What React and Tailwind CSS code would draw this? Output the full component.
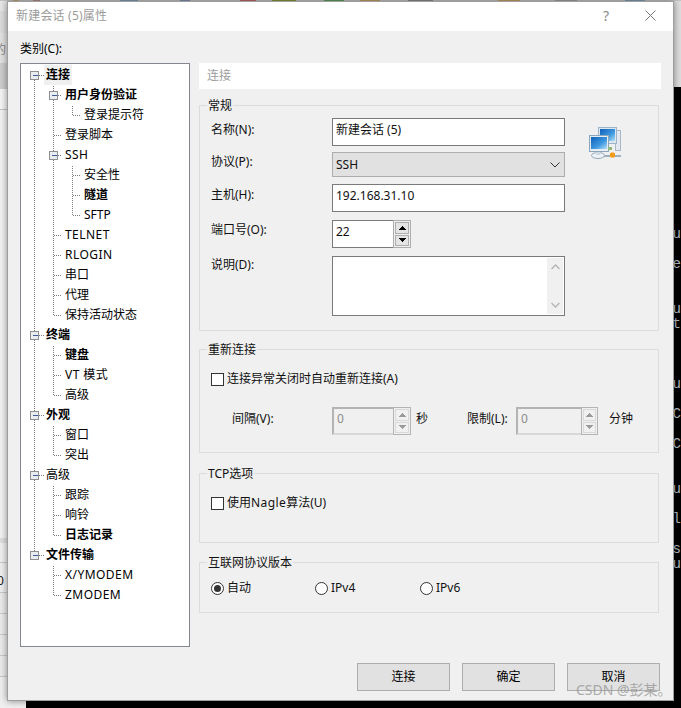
import React from "react";

const FONT = '"Noto Sans", "Noto Sans CJK SC", sans-serif';

const rows = [
  { t: "连接", l: 0, b: 1, e: 1, sel: 1 },
  { t: "用户身份验证", l: 1, b: 1, e: 1 },
  { t: "登录提示符", l: 2 },
  { t: "登录脚本", l: 1 },
  { t: "SSH", l: 1, e: 1, w: 1 },
  { t: "安全性", l: 2 },
  { t: "隧道", l: 2, b: 1 },
  { t: "SFTP", l: 2 },
  { t: "TELNET", l: 1, w: 1 },
  { t: "RLOGIN", l: 1, w: 1 },
  { t: "串口", l: 1 },
  { t: "代理", l: 1 },
  { t: "保持活动状态", l: 1 },
  { t: "终端", l: 0, b: 1, e: 1 },
  { t: "键盘", l: 1, b: 1 },
  { t: "VT 模式", l: 1, w: 1 },
  { t: "高级", l: 1 },
  { t: "外观", l: 0, b: 1, e: 1 },
  { t: "窗口", l: 1 },
  { t: "突出", l: 1 },
  { t: "高级", l: 0, e: 1 },
  { t: "跟踪", l: 1 },
  { t: "响铃", l: 1 },
  { t: "日志记录", l: 1, b: 1 },
  { t: "文件传输", l: 0, b: 1, e: 1 },
  { t: "X/YMODEM", l: 1, w: 1 },
  { t: "ZMODEM", l: 1, w: 1 },
];

const cy = (i) => 11.5 + 20 * i;
const LX = [13.5, 32.5, 51.5];
const HX = [23, 41, 60];

function TreeLines() {
  const v = [];
  const h = [];
  const boxes = [];
  const lastL0 = rows.map((r) => r.l).lastIndexOf(0);
  v.push([LX[0], cy(0), cy(lastL0)]);
  rows.forEach((r, i) => {
    if (r.e) boxes.push([LX[r.l], cy(i)]);
    h.push([r.e ? LX[r.l] + 4 : LX[r.l], HX[r.l], cy(i)]);
    if (r.e || r.l === 0) {
      let last = -1;
      for (let j = i + 1; j < rows.length && rows[j].l > r.l; j++) {
        if (rows[j].l === r.l + 1) last = j;
      }
      if (last > 0) v.push([LX[r.l + 1], cy(i + 1) - 10, cy(last)]);
    }
  });
  return (
    <svg className="absolute left-0 top-0 pointer-events-none" width="168" height="582" shapeRendering="crispEdges">
      {v.map(([x, a, b], i) => (
        <line key={i} x1={x} x2={x} y1={a} y2={b} stroke="#7d7d7d" strokeDasharray="1 1" />
      ))}
      {h.map(([a, b, y], i) => (
        <line key={i} x1={a} x2={b} y1={y} y2={y} stroke="#7d7d7d" strokeDasharray="1 1" />
      ))}
      {boxes.map(([x, y], i) => (
        <g key={i}>
          <rect x={x - 4} y={y - 4} width="8" height="8" fill="#e9ecf0" stroke="#8f8f8f" />
          <line x1={x - 2} x2={x + 3} y1={y} y2={y} stroke="#3f5c9a" />
        </g>
      ))}
    </svg>
  );
}

function Tree() {
  return (
    <div className="relative w-[170px] h-[584px] bg-white border border-[#828790] text-[12px] text-black">
      <TreeLines />
      <div className="flex flex-col">
        {rows.map((r, i) => {
          const pad = r.l === 0 ? "pl-[25px]" : r.l === 1 ? "pl-[44px]" : "pl-[63px]";
          return (
            <div key={i} className={`h-[20px] flex items-center leading-[16px] ${pad} ${i === 0 ? "mt-[1px]" : ""}`}>
              <span
                className={`relative block h-[20px] leading-[20px] whitespace-pre ${r.b ? "font-bold" : ""} ${r.w ? "tracking-[0.45px]" : ""} ${
                  r.sel ? "bg-[#f0f0f0] pl-[2px] pr-[2px] -ml-[2px]" : ""
                }`}
              >
                {r.t}
              </span>
            </div>
          );
        })}
      </div>
    </div>
  );
}

function Group({ title, className, children }) {
  return (
    <div className={`relative w-[460px] border border-[#dcdcdc] ${className}`}>
      <span className="absolute left-[7px] -top-[8px] bg-[#f0f0f0] px-[1px] leading-[16px] text-[12px]">{title}</span>
      {children}
    </div>
  );
}

function Arrow({ up, color }) {
  return (
    <svg width="7" height="4" viewBox="0 0 7 4" shapeRendering="crispEdges">
      <path d={up ? "M3.5 0 L7 4 H0 Z" : "M0 0 H7 L3.5 4 Z"} fill={color} />
    </svg>
  );
}

function Spin({ inputW, value, disabled, spinW = "w-[18px]" }) {
  return (
    <div className="flex h-[28px]">
      <div
        className={`${inputW} h-full flex items-center pl-[3px] pb-[4px] text-[12px] ${
          disabled
            ? "bg-[#f0f0f0] border-[2px] border-r-0 border-[#b4b4b4] border-b-[#d8d8d8] text-[#8c8c8c]"
            : "bg-white border border-r-0 border-[#7a7a7a]"
        }`}
      >
        {value}
      </div>
      <div className={`${spinW} h-full flex flex-col gap-[1px] p-[1px] border ${disabled ? "border-[#b4b4b4] bg-[#f0f0f0]" : "border-[#adadad] bg-[#f0f0f0]"}`}>
        <div className={`flex-1 flex items-center justify-center border ${disabled ? "bg-[#f0f0f0] border-[#d9d9d9]" : "bg-[#e4e4e4] border-[#adadad]"}`}>
          <Arrow up color={disabled ? "#9a9a9a" : "#000"} />
        </div>
        <div className={`flex-1 flex items-center justify-center border ${disabled ? "bg-[#f0f0f0] border-[#d9d9d9]" : "bg-[#e4e4e4] border-[#adadad]"}`}>
          <Arrow color={disabled ? "#9a9a9a" : "#000"} />
        </div>
      </div>
    </div>
  );
}

function Check({ label }) {
  return (
    <div className="ml-[11px] flex items-center gap-[3px] h-[16px] text-[12px] leading-[16px]">
      <span className="block w-[13px] h-[13px] bg-white border border-[#333]" />
      <span>{label}</span>
    </div>
  );
}

function Radio({ label, checked, className }) {
  return (
    <div className={`flex items-center gap-[3px] h-[16px] ${className}`}>
      <span className="flex items-center justify-center w-[13px] h-[13px] rounded-full bg-white border border-[#333]">
        {checked ? <span className="block w-[7px] h-[7px] rounded-full bg-[#333]" /> : null}
      </span>
      <span>{label}</span>
    </div>
  );
}

function NetIcon() {
  return (
    <svg className="ml-[22px] mt-[8px] shrink-0" width="36" height="36" viewBox="0 0 36 36">
      <defs>
        <linearGradient id="scr" x1="0" y1="0" x2="1" y2="1">
          <stop offset="0" stopColor="#0f5fb8" />
          <stop offset="0.6" stopColor="#3f9ae0" />
          <stop offset="1" stopColor="#b7e0f6" />
        </linearGradient>
      </defs>
      <rect x="28.5" y="4.5" width="5" height="20" fill="#e3e9ef" stroke="#a9b8c6" />
      <rect x="11.5" y="1.5" width="18" height="16" fill="#dde7f0" stroke="#9db3c8" />
      <rect x="13" y="3" width="15" height="12" fill="url(#scr)" />
      <rect x="14" y="29" width="20" height="2" fill="#9fb0c0" />
      <ellipse cx="11" cy="29.5" rx="6.5" ry="3" fill="#eef2f6" stroke="#93a6b8" />
      <rect x="9" y="25" width="4" height="4" fill="#cfd9e2" />
      <rect x="2.5" y="9.5" width="19" height="16" fill="#e6edf3" stroke="#8ea6bc" />
      <rect x="4" y="11" width="16" height="12" fill="url(#scr)" />
      <rect x="23" y="26.5" width="5" height="5" rx="1.5" fill="#f39a14" />
      <rect x="21" y="21" width="4" height="3" fill="#8fb87a" />
    </svg>
  );
}

const termLines = [
  ["u", 235], ["e", 265], ["u", 310], ["t", 325], ["u", 385], ["C", 415], ["C", 445], ["u", 490], ["l", 520], ["s", 550], ["u", 565],
];

function TerminalText() {
  let prev = 87;
  return (
    <div className="flex flex-col pl-[647px] font-['Liberation_Mono'] text-[14px] text-[#b4bfc6] leading-[15px]">
      {termLines.map(([c, y], i) => {
        const top = y - 8 - prev;
        prev = y + 7;
        return (
          <div key={i} className="h-[15px]" style={{ marginTop: top }}>
            {c}
          </div>
        );
      })}
    </div>
  );
}

function TopStrip() {
  return (
    <div className="absolute left-0 top-0 w-[681px] h-px flex bg-[#c4c4c4]">
      <div className="ml-[13px] w-[6px] bg-[#c9a67a]" />
      <div className="ml-[14px] w-[7px] bg-[#b98a8a]" />
      <div className="ml-[80px] w-[18px] bg-[#7f9fb5]" />
      <div className="ml-[42px] w-[10px] bg-[#7f93b5]" />
      <div className="ml-[50px] w-[16px] bg-[#c26a6a]" />
      <div className="ml-[16px] w-[24px] bg-[#8a9a3a]" />
      <div className="ml-[28px] w-[20px] bg-[#5aa05a]" />
      <div className="ml-[16px] w-[20px] bg-[#c4a06a]" />
      <div className="ml-[28px] w-[25px] bg-[#8c8c8c]" />
      <div className="ml-[65px] w-[22px] bg-[#c4a06a]" />
      <div className="ml-[35px] w-[22px] bg-[#a0a0a0]" />
      <div className="ml-[48px] w-[20px] bg-[#7f9fb5]" />
    </div>
  );
}

function Backdrop() {
  return (
    <div className="flex w-[681px] h-[708px]">
      <div className="w-[26px] h-full flex flex-col bg-[#f0f0f0] overflow-hidden">
        <div className="h-[11px] bg-[#e6e6e6]" />
        <div className="h-[22px] bg-[#dcdcdc]" />
        <div className="h-[30px] bg-[#e2e2e2] text-[12px] leading-[34px] text-[#888] -indent-[6px]">的</div>
        <div className="h-[26px] bg-[#cdcdcd]" />
        <div className="h-[21px] bg-[#f5f5f5] border-b border-[#c4c4c4]" />
        <div className="h-[428px] bg-[#f2f2f2]" />
        <div className="h-[5px] bg-[#dedede]" />
        <div className="h-[20px] bg-[#f0f0f0] border-b border-[#c8c8c8]" />
        <div className="h-[30px] bg-[#efefef] border-b border-[#c8c8c8] text-[12px] leading-[36px] text-[#222] -indent-[3px]">0</div>
        <div className="h-[21px] bg-[#ebebeb] border-b border-[#c8c8c8]" />
        <div className="h-[21px] bg-[#ebebeb] border-b border-[#c8c8c8]" />
        <div className="h-[21px] bg-[#ebebeb] border-b border-[#c8c8c8]" />
        <div className="h-[21px] bg-[#ebebeb] border-b border-[#c8c8c8]" />
        <div className="flex-1 bg-[#f0f0f0]" />
      </div>
      <div className="flex-1 h-full flex flex-col bg-black">
        <div className="h-[87px] bg-[#dedede]" />
        <TerminalText />
      </div>
    </div>
  );
}

function Btn({ children }) {
  return (
    <div className="w-[93px] h-[28px] flex items-center justify-center bg-[#e1e1e1] border border-[#adadad] text-[12px]">
      {children}
    </div>
  );
}

function FormRow({ label, mt, children }) {
  return (
    <div className="flex items-start">
      <span className={`w-[121px] leading-[16px] ${mt}`}>{label}</span>
      {children}
    </div>
  );
}

function Dialog() {
  return (
    <div className="absolute left-[7px] top-[1px] w-[667px] h-[700px] flex flex-col bg-[#f0f0f0] border border-[#9e9e9e] shadow-[0_0_7px_rgba(0,0,0,0.45)] text-[12px] text-[#111]">
      <div className="h-[29px] pb-[2px] bg-white flex items-center shrink-0 text-[#9c9c9c]">
        <span className="ml-[8px] leading-[16px] tracking-[0.2px]">新建会话 (5)属性</span>
        <span className="ml-auto mr-[36px] text-[14px] text-[#8a8a8a] leading-[16px]">?</span>
        <svg className="mr-[17px]" width="11" height="11" viewBox="0 0 11 11">
          <path d="M0.5 0.5 L10.5 10.5 M10.5 0.5 L0.5 10.5" stroke="#777" strokeWidth="1" fill="none" />
        </svg>
      </div>

      <div className="pt-[10px] pl-[12px] leading-[16px] text-black">类别(C):</div>

      <div className="mt-[6px] pl-[12px] flex items-start">
        <Tree />
        <div className="ml-[9px] w-[462px] flex flex-col">
          <div className="h-[26px] bg-white flex items-center pl-[8px] text-[#9c9c9c]">连接</div>

          <Group title="常规" className="mt-[16px] h-[226px]">
            <div className="flex items-start pl-[11px] pt-[12px]">
              <div className="flex flex-col w-[354px]">
                <FormRow label="名称(N):" mt="mt-[4px]">
                  <div className="w-[233px] h-[28px] flex items-center pl-[3px] pb-[4px] bg-white border border-[#7a7a7a]">新建会话 (5)</div>
                </FormRow>
                <div className="mt-[6px]">
                  <FormRow label="协议(P):" mt="mt-[2px]">
                    <div className="w-[233px] h-[25px] flex items-center justify-between pl-[3px] pr-[4px] bg-[#e1e1e1] border border-[#adadad]">
                      <span>SSH</span>
                      <svg width="10" height="6" viewBox="0 0 10 6">
                        <path d="M0.5 0.5 L5 5 L9.5 0.5" stroke="#333" fill="none" />
                      </svg>
                    </div>
                  </FormRow>
                </div>
                <div className="mt-[7px]">
                  <FormRow label="主机(H):" mt="mt-[3px]">
                    <div className="w-[233px] h-[28px] flex items-center pl-[3px] pb-[4px] bg-white border border-[#7a7a7a]">192.168.31.10</div>
                  </FormRow>
                </div>
                <div className="mt-[8px]">
                  <FormRow label="端口号(O):" mt="mt-[2px]">
                    <Spin inputW="w-[61px]" value="22" />
                  </FormRow>
                </div>
                <div className="mt-[8px]">
                  <FormRow label="说明(D):" mt="mt-[1px]">
                    <div className="w-[233px] h-[60px] flex justify-end p-[1px] bg-white border border-[#7a7a7a]">
                      <div className="w-[16px] h-full flex flex-col items-center justify-between py-[6px] bg-[#f0f0f0]">
                        <svg width="9" height="6" viewBox="0 0 9 6"><path d="M0.5 5 L4.5 1 L8.5 5" stroke="#b4b4b4" strokeWidth="1.3" fill="none" /></svg>
                        <svg width="9" height="6" viewBox="0 0 9 6"><path d="M0.5 1 L4.5 5 L8.5 1" stroke="#b4b4b4" strokeWidth="1.3" fill="none" /></svg>
                      </div>
                    </div>
                  </FormRow>
                </div>
              </div>
              <NetIcon />
            </div>
          </Group>

          <Group title="重新连接" className="mt-[18px] h-[104px]">
            <div className="pt-[21px]">
              <Check label="连接异常关闭时自动重新连接(A)" />
              <div className="mt-[20px] pl-[32px] flex items-center">
                <span className="w-[100px] mb-[4px]">间隔(V):</span>
                <Spin inputW="w-[61px]" value="0" disabled />
                <span className="w-[51px] ml-[5px] mb-[4px]">秒</span>
                <span className="w-[49px] mb-[4px]">限制(L):</span>
                <Spin inputW="w-[65px]" value="0" disabled spinW="w-[17px]" />
                <span className="ml-[11px] mb-[4px]">分钟</span>
              </div>
            </div>
          </Group>

          <Group title="TCP选项" className="mt-[20px] h-[70px]">
            <div className="pt-[21px]">
              <Check label={<>使用<span className="tracking-[0.4px]">Nagle</span>算法(U)</>} />
            </div>
          </Group>

          <Group title="互联网协议版本" className="mt-[19px] h-[51px]">
            <div className="pt-[17px] pl-[11px] flex items-center">
              <Radio label="自动" checked className="w-[104px]" />
              <Radio label="IPv4" className="w-[105px]" />
              <Radio label="IPv6" />
            </div>
          </Group>
        </div>
      </div>

      <div className="mt-[16px] pr-[13px] flex justify-end gap-[12px] text-black">
        <Btn>连接</Btn>
        <Btn>确定</Btn>
        <Btn>取消</Btn>
      </div>
    </div>
  );
}

export default function App() {
  return (
    <div className="relative w-[681px] h-[708px] overflow-hidden" style={{ fontFamily: FONT }}>
      <Backdrop />
      <TopStrip />
      <Dialog />
      <span className="absolute left-[576px] top-[681px] text-[14px] leading-[18px] text-[#8f8f8f] opacity-70 whitespace-pre">CSDN @彭某。</span>
    </div>
  );
}
